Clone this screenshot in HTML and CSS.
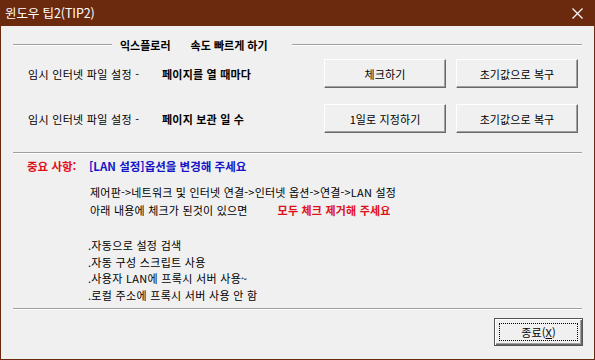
FILE: index.html
```html
<!DOCTYPE html>
<html lang="ko">
<head>
<meta charset="utf-8">
<link rel="stylesheet" href="styles.css">
</head>
<body>
<div class="window">
  <div class="titlebar">
    <span class="title">윈도우 팁2(TIP2)</span>
    <svg class="close" width="11" height="11" viewBox="0 0 11 11"><path d="M0.5 0.5 L10.5 10.5 M10.5 0.5 L0.5 10.5" stroke="#fff" stroke-width="1.2" fill="none"/></svg>
  </div>
  <div class="content">
    <div class="group-head">
      <span class="line short"></span>
      <span class="group-title"><b>익스플로러</b><b class="sub">속도 빠르게 하기</b></span>
      <span class="line grow"></span>
    </div>
    <div class="row first">
      <span class="label">임시 인터넷 파일 설정 -</span>
      <span class="value">페이지를 열 때마다</span>
      <span class="btn">체크하기</span>
      <span class="btn">초기값으로 복구</span>
    </div>
    <div class="row second">
      <span class="label">임시 인터넷 파일 설정 -</span>
      <span class="value">페이지 보관 일 수</span>
      <span class="btn">1일로 지정하기</span>
      <span class="btn">초기값으로 복구</span>
    </div>
    <div class="line full div1"></div>
    <div class="notice">
      <span class="important">중요 사항:</span>
      <span class="notice-title">[LAN 설정]옵션을 변경해 주세요</span>
    </div>
    <div class="desc">
      <div>제어판-&gt;네트워크 및 인터넷 연결-&gt;인터넷 옵션-&gt;연결-&gt;LAN 설정</div>
      <div>아래 내용에 체크가 된것이 있으면<span class="warn">모두 체크 제거해 주세요</span></div>
    </div>
    <ul class="items">
      <li>.자동으로 설정 검색</li>
      <li>.자동 구성 스크립트 사용</li>
      <li>.사용자 LAN에 프록시 서버 사용~</li>
      <li>.로컬 주소에 프록시 서버 사용 안 함</li>
    </ul>
    <div class="line full div2"></div>
    <div class="footer">
      <span class="btn default"><span class="focus">종료(<u>X</u>)</span></span>
    </div>
  </div>
</div>
</body>
</html>
```
FILE: styles.css
```css
html, body {
  margin: 0;
  padding: 0;
}
body {
  font-family: "Noto Sans CJK KR", "Noto Sans", sans-serif;
  font-size: 11px;
  color: #000;
  background: #f0f0f0;
}
.window {
  width: 595px;
  height: 360px;
  box-sizing: border-box;
  border: 1px solid #6b2a0e;
  border-top: none;
  background: #f0f0f0;
  display: flex;
  flex-direction: column;
  overflow: hidden;
}
.titlebar {
  height: 26px;
  margin: 0 -1px;
  background: #6b2a0e;
  display: flex;
  align-items: center;
  justify-content: space-between;
  padding: 0 12px 0 5px;
  flex-shrink: 0;
}
.title {
  color: #fff;
  font-family: "Noto Sans CJK KR", "Noto Sans", sans-serif;
  font-size: 12.5px;
  line-height: 26px;
  letter-spacing: -0.1px;
}
.close {
  display: block;
}
.content {
  padding: 0 12px;
  display: flex;
  flex-direction: column;
}
.line {
  height: 1px;
  background: #a0a0a0;
  border-bottom: 1px solid #fff;
}
.group-head {
  margin-top: 11px;
  height: 16px;
  display: flex;
  align-items: center;
}
.line.short {
  width: 99px;
}
.line.grow {
  flex: 1;
}
.group-title {
  padding: 0 24px 0 8px;
  display: flex;
  gap: 20px;
  font-size: 11px;
}
.group-title b {
  font-weight: 600;
}
.row {
  display: flex;
  align-items: center;
  gap: 0;
  padding-left: 15px;
}
.row > * {
  flex-shrink: 0;
}
.row.first {
  margin-top: 6px;
}
.row.second {
  margin-top: 16px;
}
.label {
  width: 134px;
  letter-spacing: 0.3px;
}
.value {
  width: 162px;
  font-weight: bold;
  letter-spacing: 0.2px;
}
.btn {
  box-sizing: border-box;
  width: 122px;
  height: 29px;
  display: flex;
  align-items: center;
  justify-content: center;
  background: #f0f0f0;
  border-top: 1px solid #fff;
  border-left: 1px solid #fff;
  border-right: 1px solid #696969;
  border-bottom: 1px solid #696969;
  box-shadow: inset -1px -1px 0 #a0a0a0;
  letter-spacing: 0.1px;
}
.row .btn + .btn {
  margin-left: 10px;
}
.line.full {
  width: 569px;
}
.div1 {
  margin-top: 19px;
}
.notice {
  margin-top: 4px;
  display: flex;
  align-items: center;
  padding-left: 14px;
  height: 16px;
  font-weight: bold;
  font-size: 11.5px;
}
.important {
  color: #e0101a;
  width: 62px;
}
.notice-title {
  color: #1414c8;
}
.desc {
  margin-top: 9px;
  padding-left: 77px;
  line-height: 18px;
  letter-spacing: 0.2px;
}
.warn {
  color: #e0101a;
  font-weight: bold;
  margin-left: 30px;
}
.items {
  list-style: none;
  margin: 18px 0 0 0;
  padding-left: 75px;
  line-height: 16.5px;
  letter-spacing: 0.3px;
}
.div2 {
  margin-top: 5px;
}
.footer {
  display: flex;
  justify-content: flex-end;
  margin-top: 8px;
}
.btn.default {
  width: 89px;
  height: 28px;
  margin-right: -1px;
  border: 1px solid #555;
  box-shadow: inset 1px 1px 0 #fff, inset -1px -1px 0 #696969, inset -2px -2px 0 #a0a0a0;
}
.focus {
  box-sizing: border-box;
  width: 79px;
  height: 18px;
  border: 1px dotted #000;
  display: flex;
  align-items: center;
  justify-content: center;
}
```
